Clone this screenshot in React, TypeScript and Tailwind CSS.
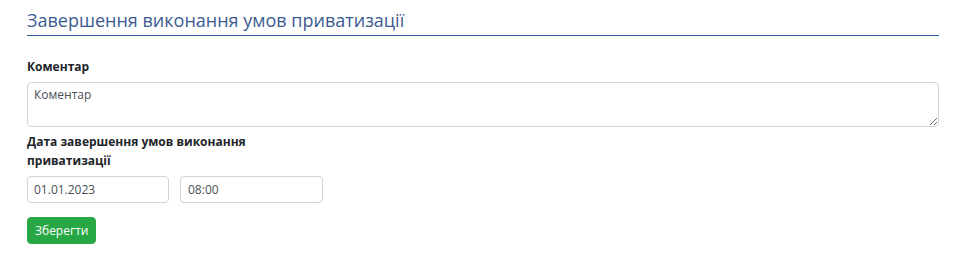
export default function App() {
  return (
    <div className="w-[976px] h-[259px] bg-white px-[27px] pt-[7px] text-[#212529]" style={{ fontFamily: '"Open Sans", "Noto Sans", sans-serif' }}>
      <h4 className="text-[18px] leading-[26px] font-normal text-[#3b5b92] border-b border-[#2f5f9e] pb-[2px] mr-[10px]">
        Завершення виконання умов приватизації
      </h4>

      <form className="mt-[22px] flex flex-col items-start">
        <label className="block text-[12px] font-bold leading-[18px] mb-[6px]">Коментар</label>
        <textarea
          className="block w-[912px] h-[45px] border border-[#ced4da] rounded-[4px] px-[6px] py-[3px] text-[12px] text-[#495057] outline-none"
          defaultValue="Коментар"
        />

        <label className="block w-[250px] mt-[5px] text-[12px] font-bold leading-[19px] mb-[6px]">
          Дата завершення умов виконання приватизації
        </label>
        <div className="flex gap-[11px]">
          <input
            className="w-[142px] h-[27px] border border-[#ced4da] rounded-[4px] px-[6px] text-[12px] text-[#495057] outline-none"
            defaultValue="01.01.2023"
          />
          <input
            className="w-[143px] h-[27px] border border-[#ced4da] rounded-[4px] px-[7px] text-[12px] text-[#495057] outline-none"
            defaultValue="08:00"
          />
        </div>

        <button
          type="button"
          className="mt-[14px] h-[27px] px-[7px] bg-[#28a745] text-white text-[12px] rounded-[4px] border border-[#28a745]"
        >
          Зберегти
        </button>
      </form>
    </div>
  );
}
